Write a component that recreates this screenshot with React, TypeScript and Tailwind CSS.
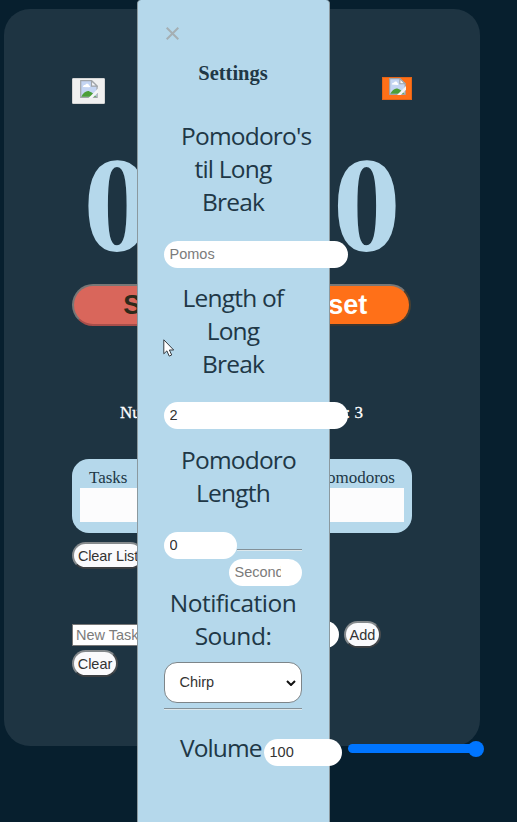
import React from "react";

const serif = "font-['Liberation_Serif',serif]";
const sans = "font-['Liberation_Sans',Arial,sans-serif]";
const humanist = "font-['Open_Sans','Noto_Sans',sans-serif]";

function BrokenImage({ className }: { className: string }) {
  return (
    <svg viewBox="0 0 18 18" className={className}>
      <path d="M.7.7h10.8l5.6 5.4v11.2H.7z" fill="#c4d5f3" stroke="#a0a4a8" strokeWidth="1.2" />
      <path d="M3 7c0-2 1.500-2.200 2.200-2C6 3 9 3.500 9 5.500c1.500 0 1.500 1.800 0 1.800z" fill="#fff" />
      <path d="M1.300 16.700c2-4 5.500-6.500 8.200-5.300 3.500 1.400 4.500 3 7 5.300z" fill="#4c9f38" />
      <path d="M11.500.7v5.400h5.600z" fill="#f5f7fa" stroke="#a0a4a8" strokeWidth="1.200" />
      <path d="M18 8.500 8.500 18h4L18 12.500z" fill="#f3f5f6" />
    </svg>
  );
}

function Heading({ children }: { children: React.ReactNode }) {
  return (
    <h2 className={`${humanist} ml-[17px] w-[104px] text-center text-[24.500px] leading-[33px] tracking-[-0.800px] text-[#203746]`}>
      {children}
    </h2>
  );
}

const field =
  "block h-[27px] rounded-full border-0 bg-white pl-[5.500px] text-[14.500px] leading-[27px] text-[#333] placeholder:text-[#7b7b7b] outline-none";
const pill =
  "h-[27px] rounded-full border-2 border-[#84898c] border-r-[#4a4d50] border-b-[#3c3f42] bg-[#fafafc] text-[14.500px] leading-[22px] whitespace-nowrap text-[#333]";

function Timer() {
  return (
    <main className="h-[737px] w-[476px] rounded-[26px] bg-[#1e3442] px-[68px]">
      <div className="flex h-[115px] items-start justify-between pt-[68px]">
        <button className="mt-px flex h-[26px] w-[33px] justify-center rounded-[1px] border border-[#d5d5d5] bg-[#f0f0f0] pt-px">
          <BrokenImage className="size-[18px]" />
        </button>
        <button className="flex h-[23px] w-[30px] justify-center border border-[#e56416] bg-[#ff7018]">
          <BrokenImage className="size-[17px]" />
        </button>
      </div>
      <div className={`${serif} flex h-[160px] items-center justify-center pt-[2px] text-[136px] leading-none font-bold text-[#b5d8eb]`}>
        00:00
      </div>
      <div className={`${sans} flex h-[42px] justify-between pr-[1px] text-[27px] leading-[38px] font-bold`}>
        <button className="w-[164px] rounded-full border-2 border-[#777] border-b-[#a94e4a] bg-[#d9665b] text-[#2d2a1b]">Start</button>
        <button className="w-[161px] rounded-full border-2 border-[#777] border-r-[#4a4032] border-b-[#3a3630] bg-[#ff7018] text-white">Reset</button>
      </div>
      <p className={`${serif} mt-[77px] flex h-[20px] justify-between pr-[49px] pl-[48px] text-[17px] leading-[20px] text-white [-webkit-text-stroke:0.3px_#fff]`}>
        <span>Number of</span>
        <span>Pomodoros: 3</span>
      </p>
      <section className="mt-[36px] h-[74px] rounded-[17px] bg-[#b5d8eb] px-[8px] pt-[9px]">
        <div className={`${serif} flex h-[20px] justify-between pr-[9px] pl-[9px] text-[17px] leading-[20px] text-[#203746]`}>
          <span>Tasks</span>
          <span>Pomodoros</span>
        </div>
        <div className="h-[34px] bg-[#fcfcfd]" />
      </section>
      <div className={`${sans} pt-[9px]`}>
        <button className={`${pill} w-[72px] tracking-[-0.100px]`}>Clear List</button>
        <div className="mt-[52px] flex items-center">
          <input placeholder="New Task" className="h-[22px] w-[170px] border border-[#777] bg-white pl-[3px] text-[14.500px] placeholder:text-[#7b7b7b]" />
          <input className={`${field} ml-[19px] w-[78px]`} />
          <button className={`${pill} ml-[5px] w-[37px] shrink-0`}>Add</button>
        </div>
        <button className={`${pill} mt-[2px] w-[46px]`}>Clear</button>
      </div>
    </main>
  );
}

function Settings() {
  return (
    <aside className={`${sans} absolute top-0 left-[137px] h-[822px] w-[193px] rounded-t-[4px] border-x border-[#8b999f] bg-[#b5d8eb] pl-[26px]`}>
      <button className="mt-[27px] ml-[2px] block size-[13px]">
        <svg viewBox="0 0 13 13" className="size-[13px] stroke-[#a5afb3]" strokeWidth="2">
          <path d="M.7.7 12.300 12.300M12.300.7.7 12.300" />
        </svg>
      </button>
      <h1 className={`${serif} mt-[21px] h-[24px] w-[138px] text-center text-[20.500px] leading-[24px] font-bold text-[#203746]`}>Settings</h1>
      <div className="mt-[34px]">
        <Heading>Pomodoro's til Long Break</Heading>
      </div>
      <input placeholder="Pomos" className={`${field} mt-[23px] w-[184px]`} />
      <div className="mt-[13px]">
        <Heading>Length of Long Break</Heading>
      </div>
      <input defaultValue="2" className={`${field} mt-[22px] w-[184px]`} />
      <div className="mt-[14px]">
        <Heading>Pomodoro Length</Heading>
      </div>
      <div className="mt-[23px] flex w-[138px] items-center">
        <input defaultValue="0" className={`${field} w-[73px]`} />
        <hr className="mt-[9px] flex-1 border-t border-b border-t-[#839199] border-b-[#dce8ed]" />
      </div>
      <input placeholder="Seconds" className={`${field} ml-[65px] w-[73px] pr-[21px]`} />
      <h2 className={`${humanist} w-[138px] text-center text-[24.500px] leading-[33px] tracking-[-0.500px] whitespace-nowrap text-[#203746]`}>
        Notification
        <br />
        Sound:
      </h2>
      <div className="mt-[10px] flex h-[41px] w-[138px] items-center justify-between rounded-[13px] border border-[#7d8589] bg-white pr-[5px] pl-[14.500px] text-[14.500px] text-[#333]">
        Chirp
        <svg viewBox="0 0 10 6" className="h-[6px] w-[10px]" fill="none" stroke="#111" strokeWidth="2">
          <path d="m1 1 4 4 4-4" />
        </svg>
      </div>
      <hr className="mt-[5px] w-[138px] border-t border-b border-t-[#839199] border-b-[#dce8ed]" />
      <div className="mt-[20px] flex w-[321px] items-center pl-[16px]">
        <span className={`${humanist} -mt-[2px] w-[84px] text-[24.500px] leading-[33px] tracking-[-0.900px] text-[#203746]`}>Volume</span>
        <input defaultValue="100" className={`${field} mt-[9px] w-[78px]`} />
        <div className="mt-px ml-[6px] flex h-[16px] w-[137px] items-center">
          <div className="h-[9px] w-[124px] rounded-l-full bg-[#0075ff]" />
          <div className="-ml-[4px] size-[16px] rounded-full bg-[#0075ff]" />
        </div>
      </div>
    </aside>
  );
}

export default function App() {
  return (
    <div className="relative h-[822px] w-[517px] overflow-hidden bg-[#071f2e] pt-[9px] pl-[4px]">
      <Timer />
      <Settings />
      <svg viewBox="0 0 12 18" className="absolute top-[339px] left-[163px] h-[18px] w-[12px]">
        <path d="M.8.8v14l3.100-2.900 2.300 5.200 2.500-1.100-2.300-5h4.300z" fill="#fff" stroke="#343b40" strokeWidth="1" />
      </svg>
    </div>
  );
}
